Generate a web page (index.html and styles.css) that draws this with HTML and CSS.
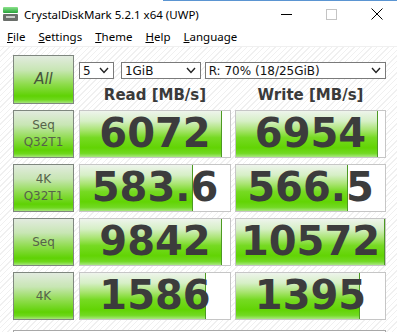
FILE: index.html
```html
<!DOCTYPE html>
<html lang="en">

<head>
    <meta charset="UTF-8">
    <meta name="viewport" content="width=device-width, initial-scale=1.0">
    <title>CrystalDiskMark</title>
    <link rel="stylesheet" href="styles.css">
</head>

<body>
    <div class="edge"></div>
    <div class="titlebar">
        <svg class="app-icon" width="15" height="14" viewBox="0 0 15 14">
            <defs>
                <linearGradient id="g1" x1="0" y1="0" x2="0" y2="1">
                    <stop offset="0" stop-color="#8be38b" />
                    <stop offset="1" stop-color="#27a13a" />
                </linearGradient>
            </defs>
            <rect x="0" y="0" width="15" height="6" rx="1" fill="url(#g1)" />
            <rect x="0" y="7" width="15" height="7" rx="1" fill="#6a6e6a" />
            <rect x="3" y="9" width="9" height="2" fill="#c9cdc9" />
        </svg>
        <span class="title">CrystalDiskMark 5.2.1 x64 (UWP)</span>
        <div class="controls">
            <span class="ctrl"><svg width="11" height="11"><path d="M0 5.5H11" stroke="#000" /></svg></span>
            <span class="ctrl"><svg width="11" height="11"><rect x="0.5" y="0.5" width="10" height="10" fill="none" stroke="#c4c4c4" /></svg></span>
            <span class="ctrl"><svg width="12" height="12"><path d="M0.5 0.5L11.5 11.5M11.5 0.5L0.5 11.5" stroke="#000" /></svg></span>
        </div>
    </div>
    <div class="menubar">
        <span class="menu-item"><u>F</u>ile</span>
        <span class="menu-item"><u>S</u>ettings</span>
        <span class="menu-item"><u>T</u>heme</span>
        <span class="menu-item"><u>H</u>elp</span>
        <span class="menu-item"><u>L</u>anguage</span>
    </div>
    <div class="main">
        <div class="board">
            <div class="label all">All</div>
            <div class="head">
                <div class="options">
                    <div class="select count"><span>5</span><svg width="10" height="7"><path d="M1 1L5 5.5L9 1" fill="none" stroke="#222" stroke-width="1.4" /></svg></div>
                    <div class="select size"><span>1GiB</span><svg width="10" height="7"><path d="M1 1L5 5.5L9 1" fill="none" stroke="#222" stroke-width="1.4" /></svg></div>
                    <div class="select drive"><span>R: 70% (18/25GiB)</span><svg width="10" height="7"><path d="M1 1L5 5.5L9 1" fill="none" stroke="#222" stroke-width="1.4" /></svg></div>
                </div>
                <div class="titles">
                    <div>Read [MB/s]</div>
                    <div>Write [MB/s]</div>
                </div>
            </div>

            <div class="label"><span>Seq</span><span>Q32T1</span></div>
            <div class="value" style="--fill: 141px">6072</div>
            <div class="value" style="--fill: 141px">6954</div>

            <div class="label"><span>4K</span><span>Q32T1</span></div>
            <div class="value" style="--fill: 112px">583.6</div>
            <div class="value" style="--fill: 111px">566.5</div>

            <div class="label"><span>Seq</span></div>
            <div class="value" style="--fill: 141px">9842</div>
            <div class="value" style="--fill: 148px">10572</div>

            <div class="label"><span>4K</span></div>
            <div class="value" style="--fill: 125px">1586</div>
            <div class="value" style="--fill: 123px">1395</div>
        </div>
        <div class="comment"></div>
    </div>
</body>

</html>
```

FILE: styles.css
```css
body {
    margin: 0;
    width: 397px;
    height: 332px;
    overflow: hidden;
    background: #fff;
    font-family: "Noto Sans", sans-serif;
    color: #000;
}

.edge {
    height: 1px;
    background: linear-gradient(to right, #fff 163px, #5b95d2 163px);
}

.titlebar {
    height: 26px;
    display: flex;
    align-items: center;
}

.app-icon {
    margin-left: 3px;
}

.title {
    margin-left: 6px;
    font-size: 11.5px;
}

.controls {
    margin-left: auto;
    margin-right: -2px;
    display: flex;
}

.ctrl {
    width: 45px;
    height: 26px;
    display: flex;
    justify-content: center;
    align-items: center;
}

.menubar {
    height: 19px;
    display: flex;
    align-items: center;
    padding-left: 1px;
    font-size: 11.5px;
    border-bottom: 1px solid #f0f0f0;
}

.menu-item {
    padding: 0 7px 0 6px;
}

.main {
    height: 285px;
    overflow: hidden;
    padding: 8px 0 0 13px;
    box-sizing: border-box;
    background: repeating-linear-gradient(-45deg, #fff 0, #fff 3px, #f0f0f0 3px, #f0f0f0 4px);
}

.board {
    display: grid;
    grid-template-columns: 62px 152px 151px;
    grid-template-rows: 49px repeat(4, 48px);
    column-gap: 4px;
    row-gap: 6px;
}

.label {
    width: 61px;
    box-sizing: border-box;
    border: 1px solid #7f877f;
    background: linear-gradient(#e2ebdf 0%, #c8e6b4 30%, #8edc4c 60%, #5fd204 85%, #6ed81c 93%, #a6e57c 100%);
    display: flex;
    flex-direction: column;
    justify-content: center;
    align-items: center;
    font-family: "DejaVu Sans", sans-serif;
    font-size: 12px;
    line-height: 17px;
    color: #56634a;
}

.label.all {
    font-size: 15px;
    font-style: italic;
    color: #46543c;
}

.head {
    grid-column: 2 / 4;
    display: flex;
    flex-direction: column;
}

.options {
    display: flex;
    margin-top: 7px;
    height: 17px;
}

.select {
    box-sizing: border-box;
    height: 17px;
    border: 1px solid #7a7a7a;
    background: #fff;
    display: flex;
    align-items: center;
    justify-content: space-between;
    padding: 0 4px 0 3px;
    font-family: "DejaVu Sans", sans-serif;
    font-size: 12px;
    color: #111;
}

.select.count {
    width: 35px;
}

.select.size {
    width: 80px;
    margin-left: 7px;
}

.select.drive {
    width: 182px;
    margin-left: 4px;
}

.titles {
    margin-top: auto;
    display: grid;
    grid-template-columns: 152px 151px;
    column-gap: 4px;
    text-align: center;
    font-family: "DejaVu Sans", sans-serif;
    font-weight: bold;
    font-size: 15px;
    line-height: 17px;
    color: #3a3a3a;
}

.value {
    --bar: linear-gradient(#eef4ec 0%, #d6efc6 22%, #a7e46e 42%, #76da22 58%, #62d404 80%, #72d923 92%, #a9e782 100%);
    border: 1px solid #c6c6c6;
    background-color: #fff;
    background-image: linear-gradient(#4c9a22, #4c9a22), var(--bar);
    background-size: 1px 100%, var(--fill) 100%;
    background-position: var(--fill) 0, 0 0;
    background-repeat: no-repeat;
    display: flex;
    justify-content: center;
    align-items: center;
    font-family: "DejaVu Sans", sans-serif;
    font-weight: bold;
    font-size: 40px;
    color: #3c3c3c;
    padding-bottom: 2px;
}

.comment {
    width: 373px;
    height: 20px;
    margin-top: 10px;
    box-sizing: border-box;
    border: 1px solid #a8a8a8;
    background: #fff;
}
```
